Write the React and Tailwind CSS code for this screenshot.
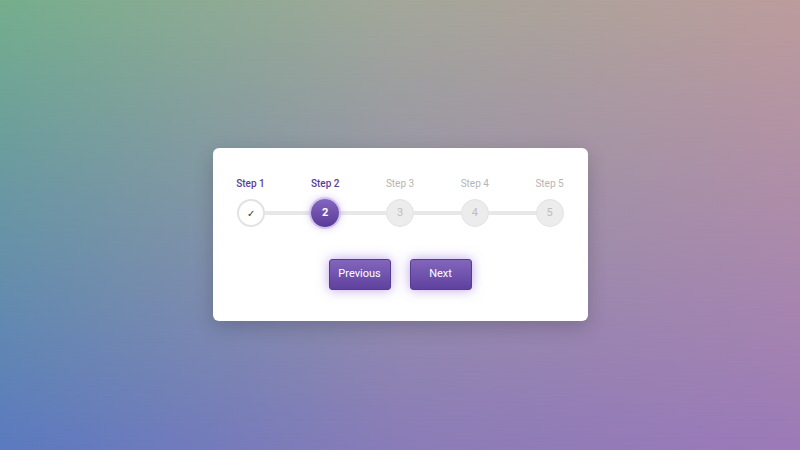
import React, { useState } from "react";

const steps = [1, 2, 3, 4, 5];

const StepCircle = ({ n, current }) => {
  if (n < current) {
    return (
      <div className="w-7 h-7 shrink-0 rounded-full bg-white border-2 border-[#e2e2e2] flex items-center justify-center text-[10px] text-[#333]">
        ✓
      </div>
    );
  }
  if (n === current) {
    return (
      <div className="relative z-10 w-7 h-7 shrink-0 rounded-full bg-[linear-gradient(to_bottom,#8466c0,#5a3b98)] shadow-[0_0_0_2px_rgba(200,185,235,0.7),0_0_9px_rgba(120,80,200,0.45)] flex items-center justify-center text-[11px] font-bold text-white">
        {n}
      </div>
    );
  }
  return (
    <div className="w-7 h-7 shrink-0 rounded-full bg-[#ececec] border border-[#e3e3e3] flex items-center justify-center text-[11px] text-[#bdbdbd]">
      {n}
    </div>
  );
};

const App = () => {
  const [current, setCurrent] = useState(2);

  return (
    <div className="relative w-full h-[450px] overflow-hidden bg-[linear-gradient(to_right,#5b7ac0,#8a7cb8_50%,#9c7ab8)] flex items-center justify-center font-['Roboto',sans-serif]">
      {/* top half of the backdrop */}
      <div className="absolute inset-0 bg-[linear-gradient(to_right,#74ae8c,#a3a79a_50%,#bc9c9c)] [mask-image:linear-gradient(to_bottom,black,transparent)]" />

      <div className="relative mt-[19px] w-[375px] h-[173px] bg-white rounded-md shadow-[0_6px_20px_rgba(0,0,0,0.18)] pt-[30px] px-6">
        {/* labels */}
        <div className="flex justify-between">
          {steps.map((n) => (
            <div key={n} className="w-7 flex justify-center">
              <span
                className={
                  "whitespace-nowrap text-[10px] leading-3 " +
                  (n <= current ? "text-[#5b3d99] font-medium" : "text-[#b5b5b5]")
                }
              >
                Step {n}
              </span>
            </div>
          ))}
        </div>

        {/* circles */}
        <div className="flex items-center mt-[9px]">
          {steps.map((n, i) => (
            <React.Fragment key={n}>
              {i > 0 && <div className="flex-1 h-1 bg-[#e8e8e8]" />}
              <StepCircle n={n} current={current} />
            </React.Fragment>
          ))}
        </div>

        {/* buttons */}
        <div className="flex justify-center gap-[19px] mt-[32px]">
          <button
            onClick={() => setCurrent(Math.max(1, current - 1))}
            className="w-[62px] h-[31px] rounded-[3px] border border-[#563b92] bg-[linear-gradient(to_bottom,#8266bb,#5f419f)] text-white text-[11px] shadow-[0_0_12px_rgba(130,90,210,0.55)]"
          >
            Previous
          </button>
          <button
            onClick={() => setCurrent(Math.min(5, current + 1))}
            className="w-[62px] h-[31px] rounded-[3px] border border-[#563b92] bg-[linear-gradient(to_bottom,#8266bb,#5f419f)] text-white text-[11px] shadow-[0_0_12px_rgba(130,90,210,0.55)]"
          >
            Next
          </button>
        </div>
      </div>
    </div>
  );
};

export default App;
